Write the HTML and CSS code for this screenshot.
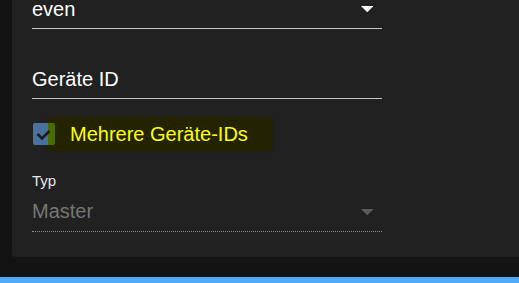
FILE: index.html
```html
<!DOCTYPE html>
<html lang="de">
<head>
<meta charset="utf-8">
<title>Geräte</title>
<link rel="stylesheet" href="styles.css">
</head>
<body>
<div class="page">
  <div class="card">
    <div class="field field-select">
      <span class="value">even</span>
      <svg class="arrow" viewBox="7 10 10 5" width="12.5" height="6.25"><path d="M7 10l5 5 5-5z" fill="#ffffff"/></svg>
    </div>
    <div class="field field-text">
      <span class="value">Geräte ID</span>
    </div>
    <div class="check-row">
      <span class="checkbox">
        <svg viewBox="0 0 22 22" width="22" height="22"><polyline points="4.5,11 9,15.5 16.5,8" fill="none" stroke="#1c1c1c" stroke-width="2.6"/></svg>
      </span>
      <span class="check-label">Mehrere Geräte-IDs</span>
    </div>
    <div class="small-label">Typ</div>
    <div class="field field-disabled">
      <span class="value">Master</span>
      <svg class="arrow arrow-disabled" viewBox="7 10 10 5" width="12.5" height="6.25"><path d="M7 10l5 5 5-5z" fill="#5c5c5c"/></svg>
    </div>
  </div>
  <div class="bar"></div>
</div>
</body>
</html>
```

FILE: styles.css
```css
html, body {
  margin: 0;
  padding: 0;
  background: #131313;
  overflow: hidden;
  font-family: "Liberation Sans", Arial, sans-serif;
}

.page {
  height: 283px;
  overflow: hidden;
}

.card {
  margin: -20px -10px 0 12px;
  padding: 20px 0 25px 20px;
  background: #212121;
  border-radius: 4px;
}

.field {
  position: relative;
  width: 350px;
  font-size: 20px;
  line-height: 24px;
  color: #ffffff;
  padding-bottom: 7px;
  border-bottom: 1px solid #c4c4c4;
}

.field-select {
  line-height: 18px;
  padding-bottom: 10px;
}

.field-text {
  margin-top: 38px;
}

.arrow {
  position: absolute;
  right: 9px;
  top: 6px;
  display: block;
}

.check-row {
  margin-top: 23px;
  height: 24px;
  display: flex;
  align-items: center;
  position: relative;
  isolation: isolate;
}

.checkbox {
  width: 22px;
  height: 22px;
  margin-left: 1px;
  border-radius: 2px;
  background: linear-gradient(to right, #4a72a0 0 15px, #4a6b00 15px);
  display: block;
  position: relative;
  z-index: 1;
}

.checkbox svg {
  display: block;
}

.check-label {
  margin-left: 15px;
  font-size: 20px;
  line-height: 24px;
  color: #ffff00;
  position: relative;
}

.check-label::before {
  content: "";
  position: absolute;
  left: -22px;
  right: -23px;
  top: -4px;
  bottom: -4px;
  background: #242300;
  border-radius: 3px;
  box-shadow: 0 0 3px 1px #242300;
  z-index: -1;
}

.small-label {
  margin-top: 26px;
  font-size: 15px;
  line-height: 18px;
  color: #e6e6e6;
}

.field-disabled {
  margin-top: 9px;
  padding-bottom: 8px;
  color: #767676;
  border-bottom: 1px dotted #8a8a8a;
}

.arrow-disabled {
  top: 10px;
}

.bar {
  margin-top: 20px;
  height: 10px;
  background: #50abf5;
}
```
